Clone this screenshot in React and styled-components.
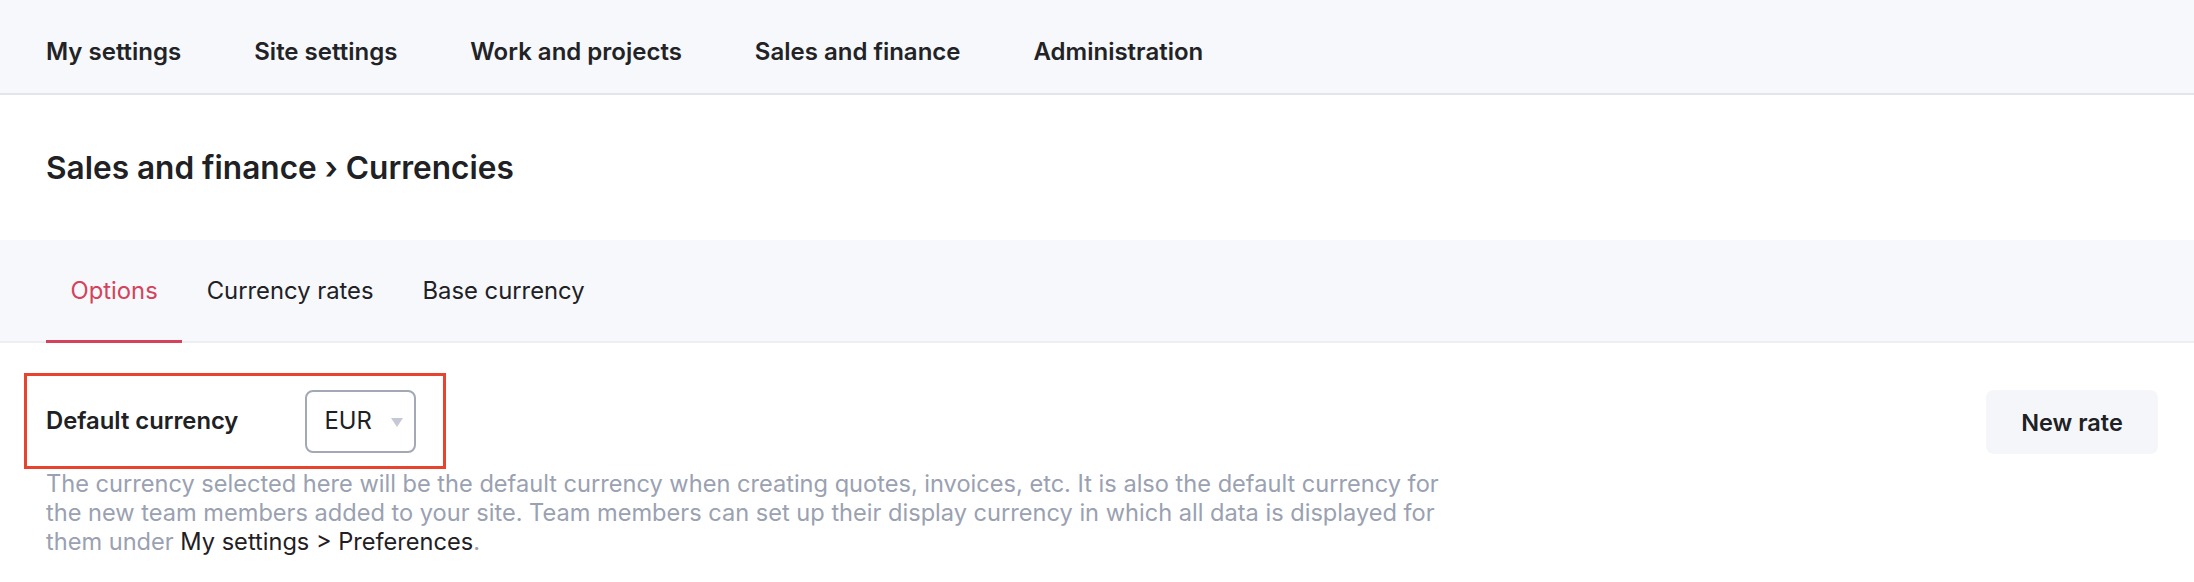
import React from 'react';
import styled, { createGlobalStyle } from 'styled-components';

const GlobalStyle = createGlobalStyle`
  body {
    margin: 0;
    background: #ffffff;
    font-family: 'Inter', 'Noto Sans', sans-serif;
    color: #202124;
  }
`;

const TopNav = styled.nav`
  display: flex;
  align-items: center;
  gap: 73px;
  box-sizing: border-box;
  height: 95px;
  padding: 9px 46px 0;
  background: #f7f8fb;
  border-bottom: 2px solid #e4e5ec;
`;

const NavItem = styled.a`
  font-size: 24px;
  font-weight: 600;
  color: #222326;
  text-decoration: none;
  cursor: pointer;
`;

const TitleBar = styled.div`
  display: flex;
  align-items: center;
  height: 145px;
  padding: 0 46px;
`;

const Title = styled.h1`
  margin: 0;
  font-size: 31.6px;
  font-weight: 600;
  color: #202124;
`;

const TabBar = styled.div`
  display: flex;
  align-items: stretch;
  height: 101px;
  padding: 0 46px;
  background: #f7f8fc;
  border-bottom: 2px solid #eceef3;
`;

const Tab = styled.div`
  display: flex;
  align-items: center;
  padding: 0 24.5px;
  font-size: 23.8px;
  color: ${p => (p.$active ? '#d4435b' : '#202124')};
  border-bottom: 3px solid ${p => (p.$active ? '#d4435b' : 'transparent')};
  margin-bottom: -2px;
  cursor: pointer;
`;

const Content = styled.div`
  display: flex;
  justify-content: space-between;
  align-items: flex-start;
  padding: 30px 36px 0 46px;
`;

const Field = styled.div`
  display: flex;
  flex-direction: column;
`;

const Highlight = styled.div`
  display: inline-flex;
  align-items: center;
  gap: 67px;
  align-self: flex-start;
  margin-left: -22px;
  padding: 14px 27px 13px 19px;
  border: 3px solid #e8432e;
`;

const Label = styled.span`
  font-size: 23.8px;
  line-height: 1.2;
  font-weight: 600;
  color: #202124;
`;

const Select = styled.div`
  display: flex;
  align-items: center;
  gap: 19px;
  box-sizing: border-box;
  width: 111px;
  height: 63px;
  padding: 0 16px 0 17px;
  border: 2px solid #a3a8b6;
  border-radius: 8px;
  cursor: pointer;
`;

const SelectValue = styled.span`
  font-size: 23.8px;
  line-height: 1.2;
  color: #202124;
`;

const Caret = styled.span`
  width: 0;
  height: 0;
  margin-top: 2px;
  border-left: 6px solid transparent;
  border-right: 6px solid transparent;
  border-top: 9px solid #c6c9d5;
`;

const Help = styled.p`
  margin: 0;
  max-width: 1430px;
  font-size: 23.6px;
  line-height: 29px;
  color: #9aa1b1;
`;

const Link = styled.span`
  color: #1f2024;
`;

const Button = styled.button`
  box-sizing: border-box;
  width: 172px;
  height: 64px;
  margin-top: 17px;
  border: none;
  border-radius: 8px;
  background: #f5f6fa;
  font-family: inherit;
  font-size: 23.5px;
  font-weight: 600;
  color: #202124;
  cursor: pointer;
`;

const navItems = ['My settings', 'Site settings', 'Work and projects', 'Sales and finance', 'Administration'];
const tabs = ['Options', 'Currency rates', 'Base currency'];

export default function App() {
  return (
    <>
      <GlobalStyle />
      <TopNav>
        {navItems.map(item => (
          <NavItem key={item}>{item}</NavItem>
        ))}
      </TopNav>
      <TitleBar>
        <Title>Sales and finance › Currencies</Title>
      </TitleBar>
      <TabBar>
        {tabs.map((tab, i) => (
          <Tab key={tab} $active={i === 0}>
            {tab}
          </Tab>
        ))}
      </TabBar>
      <Content>
        <Field>
          <Highlight>
            <Label>Default currency</Label>
            <Select>
              <SelectValue>EUR</SelectValue>
              <Caret />
            </Select>
          </Highlight>
          <Help>
            The currency selected here will be the default currency when creating quotes, invoices, etc. It is also
            the default currency for the new team members added to your site. Team members can set up their display
            currency in which all data is displayed for them under <Link>My settings &gt; Preferences</Link>.
          </Help>
        </Field>
        <Button>New rate</Button>
      </Content>
    </>
  );
}
